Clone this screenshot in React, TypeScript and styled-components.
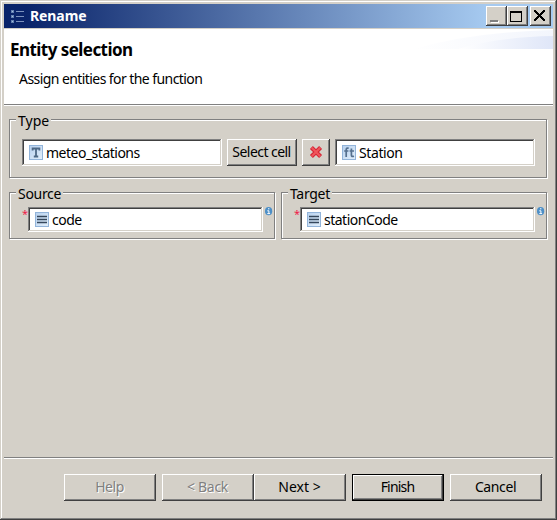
import React from "react";
import styled, { createGlobalStyle } from "styled-components";

const face = "#d4d0c8";

const Global = createGlobalStyle`
  * { box-sizing: border-box; }
  html, body { margin: 0; padding: 0; background: ${face}; overflow: hidden; }
`;

const Window = styled.div`
  width: 557px;
  height: 520px;
  display: flex;
  flex-direction: column;
  padding: 4px;
  background: ${face};
  color: #000;
  font: 14px/18px "Noto Sans", Tahoma, sans-serif;
  box-shadow: inset -1px -1px 0 #404040, inset 1px 1px 0 ${face},
    inset -2px -2px 0 #808080, inset 2px 2px 0 #fff;
`;

const TitleBar = styled.header`
  height: 24px;
  flex: none;
  display: flex;
  align-items: center;
  padding: 0 2px 0 6px;
  color: #fff;
  background: linear-gradient(90deg, #0a246a 4%, #a6caf0 88%);
`;

const Text = styled.span`
  white-space: nowrap;
`;

const WindowTitle = styled.h1`
  flex: 1;
  margin: 0 0 0 6px;
  font-size: 14px;
  line-height: 18px;
  font-weight: 700;
  letter-spacing: -0.1px;
`;

const CaptionButton = styled.button<{ $gap?: number }>`
  width: 21px;
  height: 20px;
  flex: none;
  margin: 0 0 0 ${(p) => p.$gap ?? 0}px;
  padding: 0;
  border: 0;
  background: ${face};
  box-shadow: inset -1px -1px 0 #404040, inset 1px 1px 0 #fff, inset -2px -2px 0 #808080;
  svg { display: block; }
`;

const Banner = styled.section`
  position: relative;
  height: 76px;
  flex: none;
  margin-top: 1px;
  padding: 11px 0 0 7px;
  background: #fff;
  border-bottom: 1px solid #808080;
  box-shadow: 0 1px 0 #fff;
`;

const Swoosh = styled.svg`
  position: absolute;
  top: 0;
  right: 0;
`;

const Heading = styled.h2`
  margin: 0 0 0 -1px;
  font-size: 17px;
  line-height: 20px;
  font-weight: 700;
  letter-spacing: -0.55px;
`;

const Description = styled.p`
  margin: 10px 0 0 8px;
  letter-spacing: -0.57px;
`;

const Body = styled.main`
  height: 352px;
  flex: none;
  padding: 14px 6px 0 5px;
`;

const Groups = styled.div`
  display: grid;
  grid-template-columns: 266px 266px;
  gap: 14px 6px;
`;

const Group = styled.section<{ $wide?: boolean }>`
  ${(p) => (p.$wide ? "grid-column: 1 / -1; height: 59px;" : "height: 47px;")}
  display: flex;
  flex-direction: column;
  border: 1px solid #808080;
  box-shadow: 1px 1px 0 #fff, inset 1px 1px 0 #fff;
`;

const Legend = styled.div<{ $spacing?: number }>`
  align-self: flex-start;
  height: 18px;
  margin: -8px 0 -1px 6px;
  padding: 0 2px;
  background: ${face};
  letter-spacing: ${(p) => p.$spacing ?? 0}px;
`;

const Row = styled.div<{ $top: number }>`
  display: flex;
  align-items: flex-start;
  padding: ${(p) => p.$top}px 0 0 12px;
`;

const Field = styled.div<{ $w: number; $h: number; $gap?: number; $spacing?: number }>`
  width: ${(p) => p.$w}px;
  height: ${(p) => p.$h}px;
  flex: none;
  display: flex;
  align-items: center;
  gap: 3px;
  margin-left: ${(p) => p.$gap ?? 0}px;
  padding-left: 7px;
  background: #fff;
  letter-spacing: ${(p) => p.$spacing ?? -0.5}px;
  box-shadow: inset -1px -1px 0 #fff, inset 1px 1px 0 #808080,
    inset -2px -2px 0 ${face}, inset 2px 2px 0 #404040;
  svg { flex: none; }
`;

const Button = styled.button<{ $w: number; $gap?: number; $primary?: boolean; $spacing?: number }>`
  width: ${(p) => p.$w}px;
  height: 27px;
  flex: none;
  display: flex;
  align-items: center;
  justify-content: center;
  margin: 0 0 0 ${(p) => p.$gap ?? 0}px;
  padding: 0 1px 1px 0;
  border: 0;
  color: #000;
  background: ${face};
  font: inherit;
  white-space: nowrap;
  letter-spacing: ${(p) => p.$spacing ?? 0}px;
  box-shadow: ${(p) =>
    p.$primary
      ? "inset 0 0 0 1px #000, inset -2px -2px 0 #404040, inset 2px 2px 0 #fff, inset -3px -3px 0 #808080"
      : "inset -1px -1px 0 #404040, inset 1px 1px 0 #fff, inset -2px -2px 0 #808080"};
  &:disabled { color: #808080; text-shadow: 1px 1px 0 #fff; }
`;

const Required = styled.span`
  width: 6px;
  flex: none;
  color: #f02048;
  font: 11px/13px "Noto Sans", sans-serif;
`;

const InfoIcon = styled.svg`
  flex: none;
  margin-left: 2px;
`;

const Footer = styled.footer`
  height: 59px;
  flex: none;
  display: flex;
  padding: 16px 0 0 60px;
  border-top: 1px solid #808080;
  box-shadow: inset 0 1px 0 #fff;
`;

const ListIcon = () => (
  <svg width="14" height="16" viewBox="0 -2 14 16" shapeRendering="crispEdges">
    {[0, 5, 10].map((y) => (
      <g key={y}>
        <rect x="1" y={y} width="3" height="3" fill="#6381b1" />
        <rect x="2" y={y + 1} width="1" height="1" fill="#a9c1df" />
        <rect x="6" y={y + 1} width="8" height="1" fill="#7d92bd" />
      </g>
    ))}
  </svg>
);

const Tile = ({ children }: { children: React.ReactNode }) => (
  <svg width="14" height="15" viewBox="0 0 14 15">
    <defs>
      <linearGradient id="tile" x1="0" y1="0" x2="1" y2="1">
        <stop offset="0" stopColor="#b6d0ee" />
        <stop offset="1" stopColor="#e2effb" />
      </linearGradient>
    </defs>
    <rect x=".5" y=".5" width="13" height="14" fill="url(#tile)" stroke="#92b4da" />
    {children}
  </svg>
);

const TypeIcon = () => (
  <Tile>
    <path
      d="M3.6 5.6V3.5h6.8v2.1M7 3.4v8M4.8 11.5h4.4"
      fill="none" stroke="#4d6885" strokeWidth="1.8"
    />
  </Tile>
);

const FeatureIcon = () => (
  <Tile>
    <path
      d="M6.7 3.2c-1.7-.5-2.5.2-2.5 1.7v7.2M2.2 6h4.2M9.4 3.6v6.6c0 1.3.8 1.5 2.6 1M7.6 6h4.4"
      fill="none" stroke="#55708f" strokeWidth="1.7"
    />
  </Tile>
);

const AttributeIcon = () => (
  <Tile>
    <path d="M2 4.5h10M2 7.5h10M2 10.5h10" stroke="#35475c" strokeWidth="1.4" />
  </Tile>
);

const Info = () => (
  <InfoIcon width="8" height="9" viewBox="0 0 8 9">
    <ellipse cx="3.6" cy="4.2" rx="3.6" ry="4.1" fill="#4d8fc7" />
    <path d="M3 1.8h1.4M2.3 3.8h1.6v2.8M2.3 6.6h2.8" fill="none" stroke="#fff" strokeWidth="1" />
  </InfoIcon>
);

export default function App() {
  return (
    <>
      <Global />
      <Window>
        <TitleBar>
          <ListIcon />
          <WindowTitle>Rename</WindowTitle>
          <CaptionButton aria-label="Minimize">
            <svg width="21" height="20" shapeRendering="crispEdges">
              <path d="M5 15h8v2H5z" fill="#fff" />
              <path d="M4 14h8v2H4z" fill="#808080" />
            </svg>
          </CaptionButton>
          <CaptionButton aria-label="Maximize">
            <svg width="21" height="20" shapeRendering="crispEdges">
              <path d="M3 5h12v11H3zM4 7v8h10V7z" fillRule="evenodd" />
            </svg>
          </CaptionButton>
          <CaptionButton aria-label="Close" $gap={2}>
            <svg width="21" height="20" shapeRendering="crispEdges">
              {[0, 1, 2, 3, 4, 5, 6, 7, 8, 9].map((i) => (
                <path key={i} d={`M${4 + i} ${4 + i}h2v2h-2zM${13 - i} ${4 + i}h2v2h-2z`} />
              ))}
            </svg>
          </CaptionButton>
        </TitleBar>
        <Banner>
          <Swoosh width="140" height="20" viewBox="0 0 140 20">
            <defs>
              <linearGradient id="sw">
                <stop offset="0" stopColor="#fff" />
                <stop offset="1" stopColor="#dfe6f8" />
              </linearGradient>
            </defs>
            <path d="M0 20Q60 3 140 1V20z" fill="url(#sw)" opacity=".4" />
            <path d="M45 20Q85 8 140 7V20z" fill="url(#sw)" />
          </Swoosh>
          <Heading>Entity selection</Heading>
          <Description>Assign entities for the function</Description>
        </Banner>
        <Body>
          <Groups>
            <Group $wide>
              <Legend>Type</Legend>
              <Row $top={10}>
                <Field $w={200} $h={27}><TypeIcon /><Text>meteo_stations</Text></Field>
                <Button $w={70} $gap={5} $spacing={-0.55}>Select cell</Button>
                <Button $w={28} $gap={5} aria-label="Clear">
                  <svg width="14" height="14" viewBox="0 0 14 14">
                    <path d="M2.4 2.4l9.2 9.2M11.6 2.4l-9.2 9.2" stroke="#d52535" strokeWidth="4.2" />
                    <path d="M2.8 2.8l8.4 8.4M11.2 2.8l-8.4 8.4" stroke="#f0565c" strokeWidth="2" />
                  </svg>
                </Button>
                <Field $w={200} $h={27} $gap={5} $spacing={-0.4}><FeatureIcon /><Text>Station</Text></Field>
              </Row>
            </Group>
            <Group>
              <Legend $spacing={-0.3}>Source</Legend>
              <Row $top={5}>
                <Required>*</Required>
                <Field $w={235} $h={25}><AttributeIcon /><Text>code</Text></Field>
                <Info />
              </Row>
            </Group>
            <Group>
              <Legend $spacing={-0.3}>Target</Legend>
              <Row $top={5}>
                <Required>*</Required>
                <Field $w={235} $h={25}><AttributeIcon /><Text>stationCode</Text></Field>
                <Info />
              </Row>
            </Group>
          </Groups>
        </Body>
        <Footer>
          <Button $w={92} $spacing={-0.5} disabled>Help</Button>
          <Button $w={92} $gap={6} $spacing={-0.3} disabled>&lt; Back</Button>
          <Button $w={92}>Next &gt;</Button>
          <Button $w={92} $gap={6} $spacing={-0.8} $primary>Finish</Button>
          <Button $w={92} $gap={6} $spacing={-0.4}>Cancel</Button>
        </Footer>
      </Window>
    </>
  );
}
